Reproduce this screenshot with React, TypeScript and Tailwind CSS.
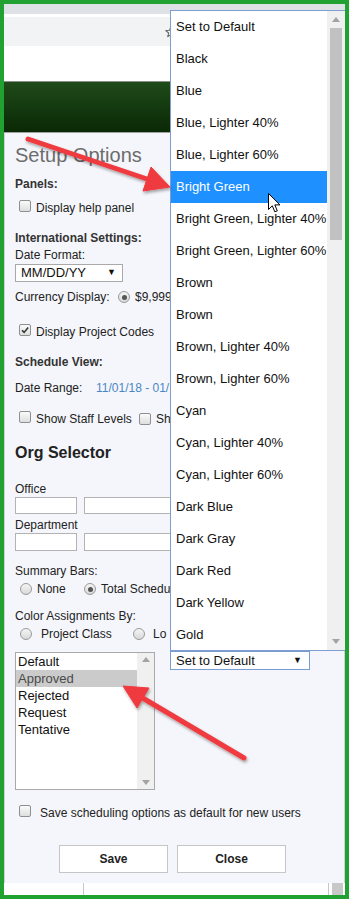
import React from 'react';

const colors = [
  'Set to Default',
  'Black',
  'Blue',
  'Blue, Lighter 40%',
  'Blue, Lighter 60%',
  'Bright Green',
  'Bright Green, Lighter 40%',
  'Bright Green, Lighter 60%',
  'Brown',
  'Brown',
  'Brown, Lighter 40%',
  'Brown, Lighter 60%',
  'Cyan',
  'Cyan, Lighter 40%',
  'Cyan, Lighter 60%',
  'Dark Blue',
  'Dark Gray',
  'Dark Red',
  'Dark Yellow',
  'Gold',
];

const statuses = ['Default', 'Approved', 'Rejected', 'Request', 'Tentative'];

function Checkbox({ checked = false }: { checked?: boolean }) {
  return (
    <span className="relative inline-block w-[12px] h-[12px] shrink-0 rounded-[2px] border border-[#8e8f8f] bg-gradient-to-b from-[#fbfbfb] to-[#dedede]">
      {checked && (
        <svg viewBox="0 0 10 10" className="absolute left-[0px] top-[0px] w-[10px] h-[10px]">
          <path d="M2 5.2 L4.1 7.4 L8.2 2.4" fill="none" stroke="#333" strokeWidth="1.6" />
        </svg>
      )}
    </span>
  );
}

function Radio({ checked = false }: { checked?: boolean }) {
  return (
    <span className="relative inline-flex items-center justify-center w-[12px] h-[12px] shrink-0 rounded-full border border-[#9a9a9a] bg-gradient-to-b from-[#f5f5f5] to-[#d9d9d9]">
      {checked && <span className="w-[5px] h-[5px] rounded-full bg-[#555]" />}
    </span>
  );
}

function Arrows() {
  return (
    <svg width="349" height="899" className="absolute left-0 top-0 z-30 pointer-events-none">
      <defs>
        <filter id="sh" x="-20%" y="-20%" width="140%" height="140%">
          <feDropShadow dx="1" dy="2" stdDeviation="1.5" floodColor="#000" floodOpacity="0.35" />
        </filter>
      </defs>
      <g filter="url(#sh)" fill="#ef3b40" stroke="#ef3b40">
        <line x1="28" y1="139" x2="150" y2="180" strokeWidth="5" strokeLinecap="round" />
        <polygon points="170,187 143,191 151,167" strokeWidth="1" strokeLinejoin="round" />
        <line x1="244" y1="758" x2="141" y2="697" strokeWidth="5" strokeLinecap="round" />
        <polygon points="123,686 149,688 137,708" strokeWidth="1" strokeLinejoin="round" />
      </g>
    </svg>
  );
}

export default function App() {
  return (
    <div className="relative w-[349px] h-[899px] overflow-hidden bg-[#21a132] p-[4px] font-['Liberation_Sans',Arial,sans-serif] text-[12px] text-[#222]">
      <div className="relative w-full h-full overflow-hidden bg-white flex flex-col">
        {/* browser chrome */}
        <div className="h-[10px] bg-[#dee1e6]" />
        <div className="h-[3px] bg-white" />
        <div className="h-[29px] bg-[#f1f3f4] flex items-center pl-[160px]">
          <svg viewBox="0 0 24 24" className="w-[14px] h-[14px]">
            <path d="M12 3 L14.6 9 L21 9.5 L16 13.7 L17.6 20 L12 16.6 L6.4 20 L8 13.7 L3 9.5 L9.4 9 Z" fill="none" stroke="#666" strokeWidth="1.8" strokeLinejoin="round" />
          </svg>
        </div>
        <div className="h-[35px] bg-white" />
        <div className="h-[51px] border-t border-[#8d8d8d] bg-gradient-to-b from-[#1f4a19] via-[#143a10] to-[#0a2805]" />
        <div className="h-[1px] bg-[#a0a0a0]" />

        {/* dialog */}
        <div className="h-[750px] bg-[#f5f6fb] border-l border-r border-[#cfd2d8] pl-[10px] flex flex-col">
          <div className="mt-[9px] h-[26px] leading-[26px] text-[20px] text-[#6c6c6c]">Setup Options</div>

          <div className="mt-[8px] h-[16px] leading-[16px] font-bold text-[#333]">Panels:</div>
          <div className="mt-[8px] h-[16px] flex items-center">
            <span className="ml-[4px]"><Checkbox /></span>
            <span className="ml-[5px]">Display help panel</span>
          </div>

          <div className="mt-[14px] h-[16px] leading-[16px] font-bold text-[#333]">International Settings:</div>
          <div className="mt-[1px] h-[16px] leading-[16px]">Date Format:</div>
          <div className="mt-[1px] h-[18px] w-[108px] border border-[#a9a9a9] bg-white flex items-center justify-between pl-[5px] pr-[6px] text-[13px] text-[#111]">
            <span>MM/DD/YY</span>
            <span className="text-[9px]">▼</span>
          </div>

          <div className="mt-[7px] h-[16px] w-[155px] overflow-hidden flex items-center whitespace-nowrap">
            <span className="w-[103px] shrink-0">Currency Display:</span>
            <Radio checked />
            <span className="ml-[5px]">$9,999</span>
          </div>

          <div className="mt-[19px] h-[16px] flex items-center">
            <span className="ml-[4px]"><Checkbox checked /></span>
            <span className="ml-[5px]">Display Project Codes</span>
          </div>

          <div className="mt-[14px] h-[16px] leading-[16px] font-bold text-[#333]">Schedule View:</div>
          <div className="mt-[10px] h-[16px] w-[155px] overflow-hidden flex items-center whitespace-nowrap">
            <span className="w-[81px] shrink-0">Date Range:</span>
            <span className="text-[#4a86c6]">11/01/18 - 01/</span>
          </div>

          <div className="mt-[15px] h-[16px] w-[155px] overflow-hidden flex items-center whitespace-nowrap">
            <span className="ml-[4px]"><Checkbox /></span>
            <span className="ml-[5px] w-[103px] shrink-0">Show Staff Levels</span>
            <Checkbox />
            <span className="ml-[5px]">Sh</span>
          </div>

          <div className="mt-[16px] h-[20px] leading-[20px] text-[16px] font-bold text-[#222]">Org Selector</div>

          <div className="mt-[18px] h-[16px] leading-[16px]">Office</div>
          <div className="h-[17px] flex gap-[7px]">
            <div className="w-[62px] border border-[#b3b3b3] bg-white" />
            <div className="w-[110px] border border-[#b3b3b3] bg-white" />
          </div>
          <div className="mt-[3px] h-[16px] leading-[16px]">Department</div>
          <div className="h-[18px] flex gap-[7px]">
            <div className="w-[62px] border border-[#b3b3b3] bg-white" />
            <div className="w-[110px] border border-[#b3b3b3] bg-white" />
          </div>

          <div className="mt-[12px] h-[16px] leading-[16px]">Summary Bars:</div>
          <div className="mt-[2px] h-[16px] w-[155px] overflow-hidden flex items-center whitespace-nowrap">
            <span className="w-[69px] shrink-0 flex items-center pl-[5px]">
              <Radio />
              <span className="ml-[5px]">None</span>
            </span>
            <Radio checked />
            <span className="ml-[5px]">Total Schedu</span>
          </div>

          <div className="mt-[11px] h-[16px] leading-[16px]">Color Assignments By:</div>
          <div className="mt-[2px] h-[16px] w-[155px] overflow-hidden flex items-center whitespace-nowrap">
            <span className="w-[118px] shrink-0 flex items-center pl-[5px]">
              <Radio />
              <span className="ml-[9px]">Project Class</span>
            </span>
            <Radio />
            <span className="ml-[8px]">Lo</span>
          </div>

          <div className="mt-[10px] flex items-start">
            <div className="w-[140px] h-[138px] border border-[#a9a9a9] bg-white flex">
              <div className="flex-1 flex flex-col text-[13px] text-[#111]">
                {statuses.map((s) => (
                  <div
                    key={s}
                    className={
                      s === 'Approved'
                        ? 'h-[17px] leading-[17px] pl-[2px] bg-[#cbcbcb] text-[#4a4a4a]'
                        : 'h-[17px] leading-[17px] pl-[2px]'
                    }
                  >
                    {s}
                  </div>
                ))}
              </div>
              <div className="w-[17px] bg-[#f0f0f0] flex flex-col items-center justify-between py-[4px]">
                <svg width="8" height="5" viewBox="0 0 8 5"><path d="M0 5 L4 0 L8 5 Z" fill="#a3a3a3" /></svg>
                <svg width="8" height="5" viewBox="0 0 8 5"><path d="M0 0 L4 5 L8 0 Z" fill="#a3a3a3" /></svg>
              </div>
            </div>
            <div className="ml-[15px] -mt-[1px] w-[140px] h-[19px] border border-[#7a9cd3] bg-white flex items-center justify-between pl-[5px] pr-[7px] text-[13px] text-[#111]">
              <span>Set to Default</span>
              <span className="text-[9px]">▼</span>
            </div>
          </div>

          <div className="mt-[15px] h-[16px] flex items-center">
            <span className="ml-[4px]"><Checkbox /></span>
            <span className="ml-[9px]">Save scheduling options as default for new users</span>
          </div>

          <div className="mt-[24px] ml-[44px] flex gap-[9px]">
            <button className="w-[109px] h-[28px] border border-[#c6c6c6] bg-white font-bold text-[12px] text-[#222]">Save</button>
            <button className="w-[109px] h-[28px] border border-[#c6c6c6] bg-white font-bold text-[12px] text-[#222]">Close</button>
          </div>
        </div>

        {/* page beneath */}
        <div className="h-[12px] bg-white flex">
          <div className="w-[80px] border-r border-[#c8c8c8]" />
          <div className="w-[245px] border-r border-[#c8c8c8]" />
          <div className="ml-[3px] w-[11px] bg-[#c8c8c8]" />
        </div>

        {/* open colour list */}
        <div className="absolute left-[166px] top-[6px] z-10 w-[176px] h-[641px] border border-[#7f9dd0] bg-white flex">
          <div className="w-[156px] overflow-hidden text-[13px] text-[#111]">
            {colors.map((c, i) => (
              <div
                key={i}
                className={
                  c === 'Bright Green'
                    ? 'h-[32px] leading-[32px] pl-[5px] whitespace-nowrap bg-[#1e90ff] text-white'
                    : 'h-[32px] leading-[32px] pl-[5px] whitespace-nowrap'
                }
              >
                {c}
              </div>
            ))}
          </div>
          <div className="w-[18px] bg-[#f0f0f0] flex flex-col items-center">
            <div className="h-[17px] flex items-center">
              <svg width="8" height="5" viewBox="0 0 8 5"><path d="M0 5 L4 0 L8 5 Z" fill="#a3a3a3" /></svg>
            </div>
            <div className="w-[12px] h-[212px] bg-[#c1c1c1]" />
            <div className="flex-1" />
            <div className="h-[17px] flex items-center">
              <svg width="8" height="5" viewBox="0 0 8 5"><path d="M0 0 L4 5 L8 0 Z" fill="#a3a3a3" /></svg>
            </div>
          </div>
        </div>

        {/* mouse cursor */}
        <svg width="14" height="21" viewBox="0 0 14 21" className="absolute left-[264px] top-[189px] z-20">
          <path d="M0.5 0.5 L0.5 16.5 L4.3 12.8 L6.8 18.8 L9.3 17.8 L6.8 11.9 L12 11.9 Z" fill="#fff" stroke="#000" strokeWidth="1" strokeLinejoin="round" />
        </svg>
      </div>

      <Arrows />
    </div>
  );
}
